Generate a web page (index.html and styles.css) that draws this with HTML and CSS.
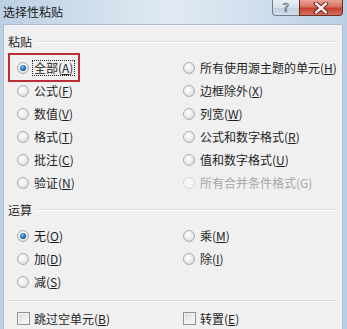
FILE: index.html
```html
<!DOCTYPE html>
<html lang="zh-CN">
<head>
<meta charset="utf-8">
<title>选择性粘贴</title>
<link rel="stylesheet" href="styles.css">
</head>
<body>
<div class="window">
  <div class="titlebar">
    <span class="title">选择性粘贴</span>
    <div class="caption">
      <div class="cbtn help"><span>?</span></div>
      <div class="cbtn close">
        <svg width="16" height="12" viewBox="0 0 16 12">
          <path d="M3 1.5 L13 10.5 M13 1.5 L3 10.5" stroke="#6b2020" stroke-width="4.4" stroke-linecap="round"/>
          <path d="M3 1.5 L13 10.5 M13 1.5 L3 10.5" stroke="#fbecea" stroke-width="2.4" stroke-linecap="round"/>
        </svg>
      </div>
    </div>
  </div>
  <div class="client">
    <div class="head"><span>粘贴</span><i class="rule"></i></div>
    <div class="grid six">
      <div class="opt"><span class="radio on"></span><span class="focus">全部(<u>A</u>)</span></div>
      <div class="opt"><span class="radio"></span><span>所有使用源主题的单元(<u>H</u>)</span></div>
      <div class="opt"><span class="radio"></span><span>公式(<u>F</u>)</span></div>
      <div class="opt"><span class="radio"></span><span>边框除外(<u>X</u>)</span></div>
      <div class="opt"><span class="radio"></span><span>数值(<u>V</u>)</span></div>
      <div class="opt"><span class="radio"></span><span>列宽(<u>W</u>)</span></div>
      <div class="opt"><span class="radio"></span><span>格式(<u>T</u>)</span></div>
      <div class="opt"><span class="radio"></span><span>公式和数字格式(<u>R</u>)</span></div>
      <div class="opt"><span class="radio"></span><span>批注(<u>C</u>)</span></div>
      <div class="opt"><span class="radio"></span><span>值和数字格式(<u>U</u>)</span></div>
      <div class="opt"><span class="radio"></span><span>验证(<u>N</u>)</span></div>
      <div class="opt disabled"><span class="radio"></span><span>所有合并条件格式(G)</span></div>
    </div>
    <div class="head second"><span>运算</span><i class="rule"></i></div>
    <div class="grid three">
      <div class="opt"><span class="radio on"></span><span>无(<u>O</u>)</span></div>
      <div class="opt"><span class="radio"></span><span>乘(<u>M</u>)</span></div>
      <div class="opt"><span class="radio"></span><span>加(<u>D</u>)</span></div>
      <div class="opt"><span class="radio"></span><span>除(<u>I</u>)</span></div>
      <div class="opt"><span class="radio"></span><span>减(<u>S</u>)</span></div>
      <div class="opt"></div>
    </div>
    <div class="sep"></div>
    <div class="grid checks">
      <div class="opt"><span class="check"></span><span>跳过空单元(<u>B</u>)</span></div>
      <div class="opt"><span class="check"></span><span>转置(<u>E</u>)</span></div>
    </div>
  </div>
  <div class="mark"></div>
</div>
</body>
</html>
```

FILE: styles.css
```css
html, body {
  margin: 0;
  padding: 0;
}
body {
  font-family: "Noto Sans CJK SC", "Noto Sans", sans-serif;
  font-size: 12px;
  color: #1e1e1e;
}
.window {
  position: relative;
  width: 347px;
  height: 329px;
  overflow: hidden;
  display: flex;
  flex-direction: column;
  background: linear-gradient(to right, #bcd0e4 0%, #cfdeec 25%, #e1eaf3 50%, #cfdeed 75%, #b9cfe5 100%);
}
.titlebar {
  height: 24px;
  flex: none;
  display: flex;
  justify-content: space-between;
  align-items: flex-start;
}
.title {
  padding-left: 3px;
  line-height: 24px;
  font-size: 12px;
  color: #1a1a1a;
}
.caption {
  display: flex;
  margin-right: 4px;
}
.cbtn {
  height: 16px;
  box-sizing: border-box;
  border: 1px solid #6f7f90;
  border-top: none;
  display: flex;
  align-items: center;
  justify-content: center;
}
.help {
  width: 27px;
  border-radius: 0 0 0 4px;
  border-right: none;
  background: linear-gradient(to bottom, #e9eff5 0%, #d6e0ea 50%, #c2cfdc 55%, #d3dee9 100%);
}
.help span {
  font-family: "DejaVu Sans", sans-serif;
  font-size: 13px;
  line-height: 14px;
  color: #ffffff;
  -webkit-text-stroke: 0.6px #46515d;
}
.close {
  width: 44px;
  border-radius: 0 0 4px 0;
  border-color: #6e2a2a;
  background: linear-gradient(to bottom, #e8a496 0%, #d8705f 45%, #c4402c 55%, #d5735f 100%);
}
.client {
  flex: 1;
  margin: 0 4px 0 3px;
  border: 1px solid #aebdcc;
  border-bottom: none;
  background: #f0f0f0;
}
.head {
  display: flex;
  align-items: center;
  height: 16px;
  line-height: 16px;
  margin: 9px 5px 0 4px;
}
.head.second {
  margin-top: 8px;
}
.rule {
  flex: 1;
  margin-left: 4px;
  height: 0;
  border-top: 1px solid #d9dde1;
  border-bottom: 1px solid #ffffff;
}
.grid {
  display: grid;
  grid-template-columns: 166px 1fr;
  grid-auto-rows: 23px;
  margin-left: 13px;
}
.grid.six {
  margin-top: 6px;
}
.grid.three {
  margin-top: 6px;
}
.grid.checks {
  margin-top: 5px;
}
.opt {
  display: flex;
  align-items: center;
  white-space: nowrap;
}
.opt u {
  text-decoration: underline;
  text-underline-offset: 1px;
}
.radio {
  position: relative;
  width: 12px;
  height: 12px;
  flex: none;
  box-sizing: border-box;
  border-radius: 50%;
  border: 1px solid #a9adb1;
  background: radial-gradient(circle at 40% 35%, #ffffff 0%, #eceef0 45%, #cfd3d7 100%);
  margin-right: 5px;
}
.radio.on::after {
  content: "";
  position: absolute;
  left: 2px;
  top: 2px;
  width: 6px;
  height: 6px;
  border-radius: 50%;
  background: radial-gradient(circle at 40% 35%, #8cc4ee 0%, #2a6fae 50%, #0d3560 100%);
}
.disabled {
  color: #a6a6a6;
}
.disabled .radio {
  border-color: #d4d6d8;
  background: #f5f5f5;
}
.focus {
  outline: 1px dotted #222;
  outline-offset: 0;
  padding: 0 1px;
  line-height: 14px;
  margin-left: -1px;
}
.check {
  width: 13px;
  height: 13px;
  flex: none;
  box-sizing: border-box;
  border: 1px solid #8e9296;
  background: linear-gradient(135deg, #d6d8db 0%, #eeeff0 60%, #fafafa 100%);
  box-shadow: inset 0 0 0 1px #f4f4f4;
  margin-right: 4px;
}
.sep {
  margin: 7px 4px 0 4px;
  height: 0;
  border-top: 1px solid #d9dde1;
  border-bottom: 1px solid #ffffff;
}
.mark {
  position: absolute;
  left: 8px;
  top: 53px;
  width: 72px;
  height: 29px;
  box-sizing: border-box;
  border: 2px solid #bd2f38;
}
```
